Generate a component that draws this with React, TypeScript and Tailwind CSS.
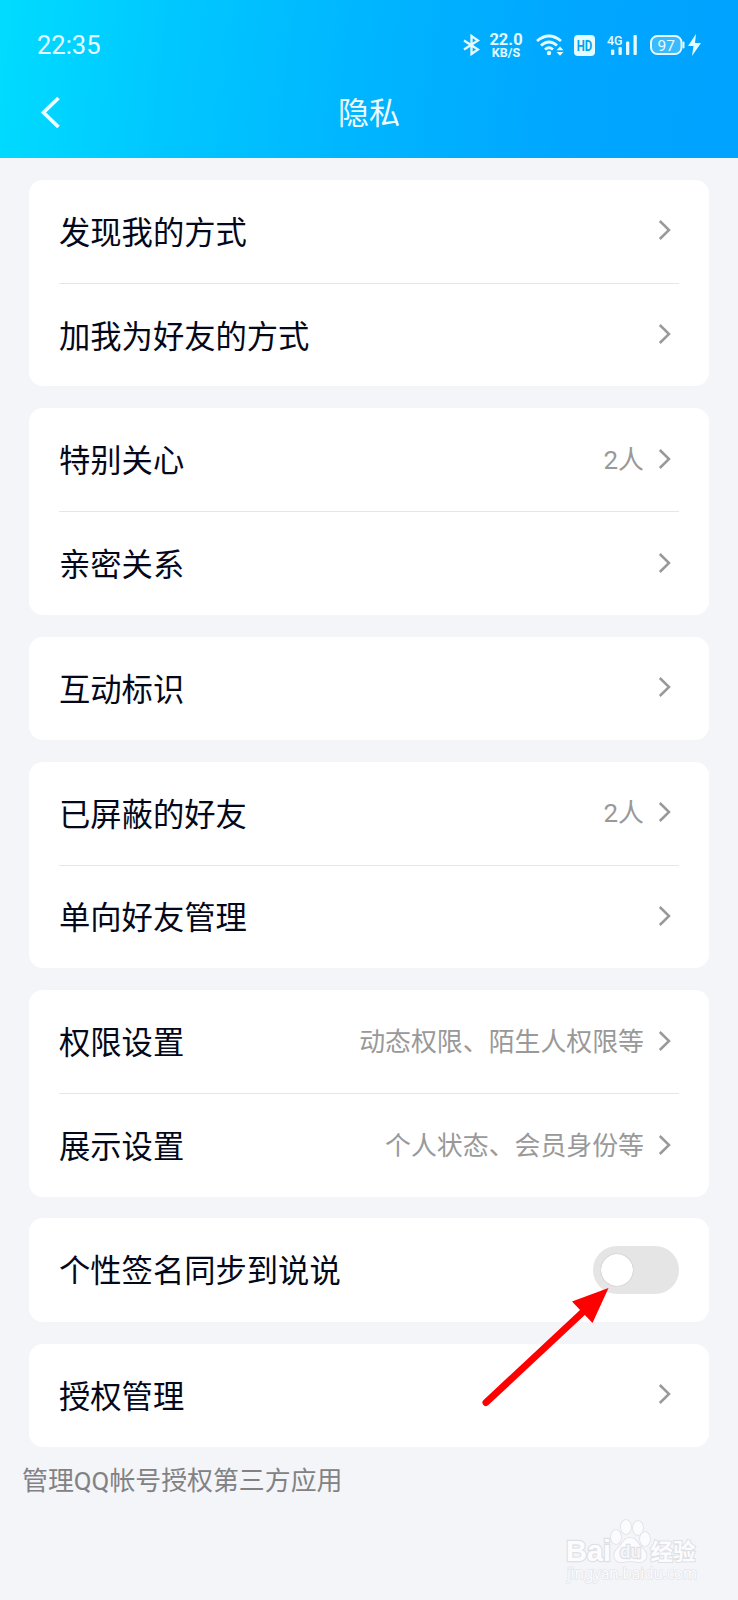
import React from "react";

// ── Types ────────────────────────────────────────────────────────────────────
type Row = {
  label: string;
  value?: string;
  toggle?: boolean;
};

// ── Settings groups, one card each ───────────────────────────────────────────
const GROUPS: Row[][] = [
  [{ label: "发现我的方式" }, { label: "加我为好友的方式" }],
  [{ label: "特别关心", value: "2人" }, { label: "亲密关系" }],
  [{ label: "互动标识" }],
  [{ label: "已屏蔽的好友", value: "2人" }, { label: "单向好友管理" }],
  [
    { label: "权限设置", value: "动态权限、陌生人权限等" },
    { label: "展示设置", value: "个人状态、会员身份等" },
  ],
  [{ label: "个性签名同步到说说", toggle: true }],
  [{ label: "授权管理" }],
];

// ── Status bar ───────────────────────────────────────────────────────────────
function StatusBar() {
  return (
    <div className="flex h-[90px] items-center pl-[37px] pr-[36px] font-['Roboto',sans-serif] text-[#e6fbff]">
      <span className="pt-[2px] text-[25.5px] leading-none">22:35</span>
      <svg className="ml-auto" width="17" height="22" viewBox="0 0 17 22" fill="none" stroke="currentColor" strokeWidth="2.3">
        <path d="M1 6.5 L15 15.5 L8.5 20 V2 L15 6.5 L1 15.5" />
      </svg>
      <div className="ml-[9px] flex w-[34px] flex-col items-center pt-[2px] font-bold">
        <span className="text-[16.5px] leading-[14px]">22.0</span>
        <span className="text-[12.5px] leading-[12px]">KB/S</span>
      </div>
      <svg className="ml-[13px]" width="28" height="22" viewBox="0 0 28 22" fill="none" stroke="currentColor" strokeWidth="2.8">
        <path d="M1 7 Q13 -3 25 7" />
        <path d="M5 11.5 Q13 4.5 21 11.5" />
        <path d="M9 15.5 Q13 12 17 15.5" />
        <circle cx="13" cy="19" r="2.2" fill="currentColor" stroke="none" />
        <path d="M20.5 16.2 L24 12.5 L27.5 16.2 Z M20.5 18 L24 21.7 L27.5 18 Z" fill="currentColor" stroke="none" />
      </svg>
      <svg className="ml-[10px] overflow-visible" width="21" height="21" viewBox="0 0 21 21">
        <rect width="21" height="21" rx="4" fill="currentColor" />
        <text x="2.8" y="16" fontSize="15.5" fontWeight="bold" fill="#00a2ee" textLength="15.5" lengthAdjust="spacingAndGlyphs">HD</text>
      </svg>
      <svg className="ml-[12px] overflow-visible" width="31" height="22" viewBox="0 0 31 22" fill="currentColor">
        <text x="0" y="10.5" fontSize="13.5" fontWeight="500" textLength="15.5" lengthAdjust="spacingAndGlyphs">4G</text>
        <rect x="4" y="15.5" width="3.3" height="5.5" rx="1" />
        <rect x="11.5" y="13" width="3.3" height="8" rx="1" />
        <rect x="19" y="7.5" width="3.3" height="13.5" rx="1" />
        <rect x="26.5" y="1" width="3.3" height="20" rx="1" />
      </svg>
      <svg className="ml-[12px]" width="52" height="24" viewBox="0 0 52 24" fill="none" stroke="currentColor">
        <rect x="1" y="3" width="30.5" height="18" rx="6.5" strokeWidth="2" fill="currentColor" fillOpacity="0.25" />
        <path d="M33.5 9.5 V14.5" strokeWidth="2" strokeLinecap="round" />
        <text x="16.3" y="17.5" textAnchor="middle" fontSize="15.5" fill="currentColor" stroke="none">97</text>
        <path d="M46 1 L38 13 H43.5 L42 23 L51 10 H45 Z" fill="currentColor" stroke="none" />
      </svg>
    </div>
  );
}

// ── Header ───────────────────────────────────────────────────────────────────
function Header() {
  return (
    <header className="h-[158px] bg-[linear-gradient(97deg,#00dcff_0%,#00c6ff_25%,#00b5ff_50%,#00a6ff_78%,#00a3ff_100%)]">
      <StatusBar />
      <div className="grid h-[46px] grid-cols-[1fr_auto_1fr] items-center text-[#f0fcff]">
        <svg className="mb-[2px] ml-[40px]" width="22" height="34" viewBox="0 0 22 34" fill="none" stroke="currentColor" strokeWidth="3.8">
          <path d="M18.5 3 L3.5 17.5 L18.5 32" />
        </svg>
        <h1 className="pt-px text-[31px] leading-none">隐私</h1>
      </div>
    </header>
  );
}

// ── List pieces ──────────────────────────────────────────────────────────────
function Chevron() {
  return (
    <svg className="mr-[8px] mb-[2px] ml-[13px] shrink-0" width="14" height="22" viewBox="0 0 14 22" fill="none" stroke="#999999" strokeWidth="2.5">
      <path d="M2.8 2 L12 11 L2.8 20" />
    </svg>
  );
}

function Toggle() {
  return (
    <button type="button" role="switch" aria-checked={false} className="flex h-[48px] w-[86px] items-center rounded-full bg-[#e5e5e5] pl-[8px]">
      <span className="h-[32px] w-[32px] rounded-full bg-white shadow-[0_0_1px_rgba(0,0,0,0.35)]" />
    </button>
  );
}

function SettingRow({ row, divided }: { row: Row; divided: boolean }) {
  return (
    <div className={divided ? "flex h-[103.3px] items-center border-t border-[#e6e6e8]" : "flex h-[103.3px] items-center"}>
      <span className="flex-1 pt-[4px] text-[31.3px] leading-none text-[#03081a]">{row.label}</span>
      {row.value && <span className="pt-[2px] text-[25.9px] leading-none text-[#999999]">{row.value}</span>}
      {row.toggle ? <Toggle /> : <Chevron />}
    </div>
  );
}

// ── Pointer over the signature switch ────────────────────────────────────────
function Pointer() {
  return (
    <svg className="absolute top-[1286px] left-[480px]" width="132" height="122" viewBox="0 0 132 122">
      <path d="M6 116.5 L104 25" stroke="#ff0000" strokeWidth="7" strokeLinecap="round" />
      <path d="M128.5 2 L92 15.5 L112.5 37 Z" fill="#ff0000" />
    </svg>
  );
}

// ── Corner mark ──────────────────────────────────────────────────────────────
function CornerMark() {
  return (
    <svg className="absolute top-[1516px] left-[562px]" width="142" height="72" viewBox="0 0 142 72" fill="#fcfcfe" stroke="#dfe0e4" strokeWidth="1.6" paintOrder="stroke">
      <g fontFamily="Liberation Sans, sans-serif" fontWeight="bold">
        <text x="4" y="45" fontSize="29" textLength="45" lengthAdjust="spacingAndGlyphs" strokeWidth="2.4">Bai</text>
        <ellipse cx="54" cy="21" rx="5" ry="7" />
        <ellipse cx="64" cy="11" rx="5" ry="7" />
        <ellipse cx="76" cy="12" rx="5" ry="7" />
        <ellipse cx="83" cy="23" rx="5" ry="7" />
        <path d="M68 22 C61 22 61 28 55 33 C50 38 52 46 59 46 C63 46 65 45 68 45 C71 45 73 46 77 46 C85 46 87 38 81 33 C75 28 75 22 68 22 Z" />
        <text x="58" y="42" fontSize="17.5" textLength="21" lengthAdjust="spacingAndGlyphs" fill="#f4f5f9" strokeWidth="2.4">du</text>
      </g>
      <text x="88.5" y="44" fontSize="22.5" fontWeight="bold" fontFamily="Noto Sans CJK SC, sans-serif" strokeWidth="2">经验</text>
      <text x="5" y="62.5" fontSize="15.5" textLength="130" lengthAdjust="spacingAndGlyphs" fontFamily="Noto Sans, sans-serif" strokeWidth="1.2">jingyan.baidu.com</text>
    </svg>
  );
}

export default function App() {
  return (
    <div className="relative h-[1600px] w-[738px] overflow-hidden bg-[#f4f5f9] font-['Roboto','Noto_Sans_CJK_SC',sans-serif]">
      <Header />
      <main className="flex flex-col gap-[21.8px] px-[29px] pt-[21.8px]">
        {GROUPS.map((rows) => (
          <section key={rows[0].label} className="rounded-[14px] bg-white px-[30px]">
            {rows.map((row, i) => (
              <SettingRow key={row.label} row={row} divided={i > 0} />
            ))}
          </section>
        ))}
      </main>
      <p className="mt-[22px] ml-[22px] text-[25.9px] leading-none text-[#828284]">管理QQ帐号授权第三方应用</p>
      <Pointer />
      <CornerMark />
    </div>
  );
}
